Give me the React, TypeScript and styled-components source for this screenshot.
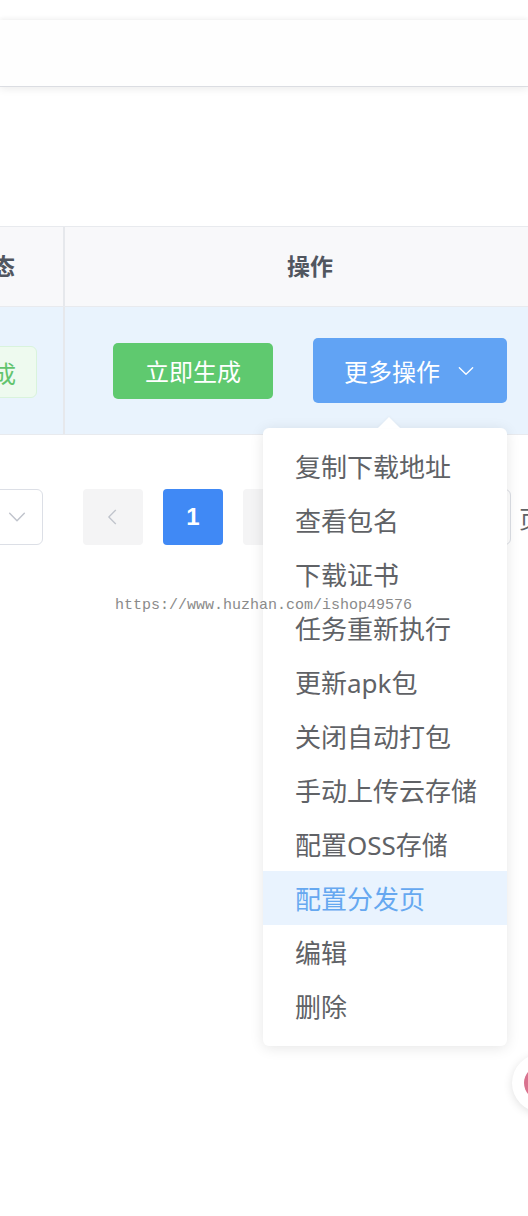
import React from 'react';
import styled, { createGlobalStyle } from 'styled-components';

const GlobalStyle = createGlobalStyle`
  html, body {
    margin: 0;
    padding: 0;
    background: #ffffff;
    overflow: hidden;
  }
  body {
    font-family: 'Noto Sans', 'Noto Sans CJK SC', sans-serif;
  }
`;

const Page = styled.div`
  position: relative;
  width: 528px;
  height: 1216px;
  overflow: hidden;
  padding-top: 20px;
  box-sizing: border-box;
`;

const TopCard = styled.div`
  height: 66px;
  background: #fefefe;
  box-shadow: 0 -2px 4px rgba(0, 0, 0, 0.04), 0 1px 0 #dcdee3,
    0 3px 8px rgba(0, 0, 0, 0.08);
`;

const TableClip = styled.div`
  margin-top: 140px;
  overflow: hidden;
`;

const Table = styled.div`
  margin-left: -79px;
  width: 634px;
  border-top: 1px solid #e8eaee;
`;

const Row = styled.div<{ $head?: boolean }>`
  display: grid;
  grid-template-columns: 144px 490px;
  height: ${(p) => (p.$head ? '79px' : '127px')};
  background: ${(p) => (p.$head ? '#f8f8fa' : '#e9f3fd')};
  border-bottom: 1px solid #e8eaee;
`;

const Cell = styled.div<{ $last?: boolean }>`
  display: flex;
  align-items: center;
  justify-content: center;
  gap: 40px;
  border-right: ${(p) => (p.$last ? 'none' : '2px solid #e6e8ec')};
`;

const HeadText = styled.span`
  font-size: 23px;
  font-weight: 700;
  color: #51565f;
  margin-top: -3px;
`;

const Tag = styled.span`
  display: inline-flex;
  align-items: center;
  height: 52px;
  padding: 0 20px;
  box-sizing: border-box;
  border: 1px solid #d9f3dc;
  border-radius: 6px;
  background: #eefaef;
  color: #62c46e;
  font-size: 24px;
  margin-top: 3px;
`;

const Button = styled.button<{ $tone: 'green' | 'blue' }>`
  display: inline-flex;
  align-items: center;
  justify-content: center;
  gap: 16px;
  border: none;
  border-radius: 5px;
  color: #ffffff;
  font-family: inherit;
  font-size: 24px;
  padding: 0;
  width: ${(p) => (p.$tone === 'green' ? '160px' : '194px')};
  height: ${(p) => (p.$tone === 'green' ? '56px' : '65px')};
  background: ${(p) => (p.$tone === 'green' ? '#5fc96f' : '#61a3f4')};
`;

const Pager = styled.div`
  display: flex;
  align-items: center;
  margin-top: 54px;
  margin-left: -157px;
  height: 56px;

  & > * {
    flex-shrink: 0;
  }
`;

const SizeSelect = styled.div`
  width: 200px;
  height: 56px;
  box-sizing: border-box;
  border: 1px solid #dcdfe6;
  border-radius: 6px;
  display: flex;
  align-items: center;
  justify-content: flex-end;
  padding-right: 14px;
  margin-right: 40px;
`;

const PageBtn = styled.div<{ $active?: boolean }>`
  width: 60px;
  height: 56px;
  border-radius: 4px;
  margin-right: 20px;
  display: flex;
  align-items: center;
  justify-content: center;
  background: ${(p) => (p.$active ? '#4089f5' : '#f4f4f5')};
  color: ${(p) => (p.$active ? '#ffffff' : '#c0c4cc')};
  font-size: 24px;
  font-weight: 700;
  font-family: 'Liberation Sans', sans-serif;
`;

const JumpLabel = styled.span<{ $tight?: boolean }>`
  font-size: 24px;
  color: #606266;
  margin: ${(p) => (p.$tight ? '0' : '0 8px 0 32px')};
`;

const JumpInput = styled.div`
  width: 100px;
  height: 56px;
  box-sizing: border-box;
  border: 1px solid #dcdfe6;
  border-radius: 6px;
  margin-right: 8px;
`;

const Menu = styled.ul`
  position: absolute;
  left: 263px;
  top: 428px;
  width: 244px;
  margin: 0;
  padding: 11px 0 13px;
  list-style: none;
  background: #ffffff;
  border-radius: 6px;
  box-sizing: border-box;
  box-shadow: 0 2px 14px rgba(0, 0, 0, 0.1);

  &::before {
    content: '';
    position: absolute;
    top: -11px;
    left: 115px;
    border: 11px solid transparent;
    border-top: 0;
    border-bottom-color: #ffffff;
    filter: drop-shadow(0 -1px 1px rgba(0, 0, 0, 0.03));
  }
`;

const MenuItem = styled.li<{ $hover?: boolean }>`
  height: 54px;
  display: flex;
  align-items: center;
  padding-left: 32px;
  font-size: 26px;
  color: ${(p) => (p.$hover ? '#66a8f0' : '#606266')};
  background: ${(p) => (p.$hover ? '#e9f3fe' : 'transparent')};
`;

const Watermark = styled.div`
  position: absolute;
  left: 115px;
  top: 597px;
  font-family: 'Liberation Mono', monospace;
  font-size: 15px;
  color: #8a8a8a;
  text-shadow: 0 0 2px #ffffff, 0 0 2px #ffffff;
  pointer-events: none;
`;

const FloatBall = styled.div`
  position: absolute;
  left: 512px;
  top: 1054px;
  width: 58px;
  height: 58px;
  border-radius: 50%;
  background: #ffffff;
  box-shadow: 0 2px 10px rgba(0, 0, 0, 0.12);
  display: flex;
  align-items: center;
  justify-content: center;

  &::after {
    content: '';
    width: 34px;
    height: 34px;
    border-radius: 50%;
    background: #d9738f;
  }
`;

const Chevron = ({ color, size }: { color: string; size: number }) => (
  <svg width={size} height={size} viewBox="0 0 24 24" fill="none">
    <path d="M4 8l8 8 8-8" stroke={color} strokeWidth="1.6" strokeLinecap="round" strokeLinejoin="round" />
  </svg>
);

const menuItems = [
  '复制下载地址',
  '查看包名',
  '下载证书',
  '任务重新执行',
  '更新apk包',
  '关闭自动打包',
  '手动上传云存储',
  '配置OSS存储',
  '配置分发页',
  '编辑',
  '删除',
];

export default function App() {
  return (
    <Page>
      <GlobalStyle />
      <TopCard />
      <TableClip>
        <Table>
          <Row $head>
            <Cell>
              <HeadText>状态</HeadText>
            </Cell>
            <Cell $last>
              <HeadText>操作</HeadText>
            </Cell>
          </Row>
          <Row>
            <Cell>
              <Tag>生成</Tag>
            </Cell>
            <Cell $last>
              <Button $tone="green">立即生成</Button>
              <Button $tone="blue">
                更多操作
                <Chevron color="#ffffff" size={20} />
              </Button>
            </Cell>
          </Row>
        </Table>
      </TableClip>
      <Pager>
        <SizeSelect>
          <Chevron color="#c0c4cc" size={22} />
        </SizeSelect>
        <PageBtn>
          <svg width="20" height="20" viewBox="0 0 24 24" fill="none">
            <path d="M15 4l-8 8 8 8" stroke="#c0c4cc" strokeWidth="1.6" strokeLinecap="round" strokeLinejoin="round" />
          </svg>
        </PageBtn>
        <PageBtn $active>1</PageBtn>
        <PageBtn>
          <svg width="20" height="20" viewBox="0 0 24 24" fill="none">
            <path d="M9 4l8 8-8 8" stroke="#c0c4cc" strokeWidth="1.6" strokeLinecap="round" strokeLinejoin="round" />
          </svg>
        </PageBtn>
        <JumpLabel>前往</JumpLabel>
        <JumpInput />
        <JumpLabel $tight>页</JumpLabel>
      </Pager>
      <Menu>
        {menuItems.map((item) => (
          <MenuItem key={item} $hover={item === '配置分发页'}>
            {item}
          </MenuItem>
        ))}
      </Menu>
      <Watermark>https://www.huzhan.com/ishop49576</Watermark>
      <FloatBall />
    </Page>
  );
}
